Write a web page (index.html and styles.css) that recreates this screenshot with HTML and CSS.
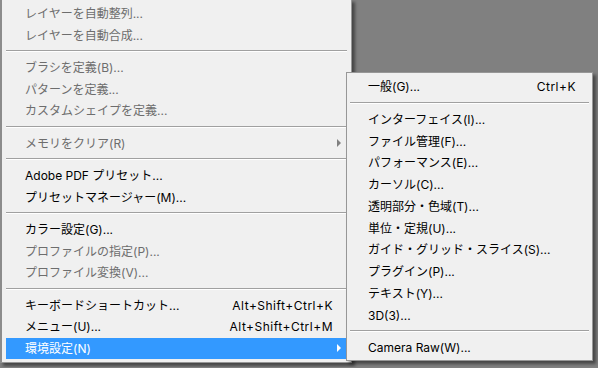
FILE: index.html
```html
<!DOCTYPE html>
<html lang="ja">
<head>
  <meta charset="UTF-8" />
  <title>編集メニュー - 環境設定</title>
  <link rel="stylesheet" href="styles.css">
</head>
<body>

<div class="desktop">
  <div class="menu main-menu">
    <div class="menu-item disabled">レイヤーを自動整列...</div>
    <div class="menu-item disabled">レイヤーを自動合成...</div>
    <div class="menu-sep"></div>
    <div class="menu-item disabled">ブラシを定義(B)...</div>
    <div class="menu-item disabled">パターンを定義...</div>
    <div class="menu-item disabled">カスタムシェイプを定義...</div>
    <div class="menu-sep"></div>
    <div class="menu-item disabled has-sub">メモリをクリア(R)</div>
    <div class="menu-sep"></div>
    <div class="menu-item">Adobe PDF プリセット...</div>
    <div class="menu-item">プリセットマネージャー(M)...</div>
    <div class="menu-sep"></div>
    <div class="menu-item">カラー設定(G)...</div>
    <div class="menu-item disabled">プロファイルの指定(P)...</div>
    <div class="menu-item disabled">プロファイル変換(V)...</div>
    <div class="menu-sep"></div>
    <div class="menu-item"><span>キーボードショートカット...</span><span class="shortcut">Alt+Shift+Ctrl+K</span></div>
    <div class="menu-item"><span>メニュー(U)...</span><span class="shortcut">Alt+Shift+Ctrl+M</span></div>
    <div class="menu-item active has-sub">環境設定(N)</div>
  </div>

  <!-- 環境設定 submenu -->
  <div class="menu sub-menu">
    <div class="menu-item"><span>一般(G)...</span><span class="shortcut">Ctrl+K</span></div>
    <div class="menu-sep"></div>
    <div class="menu-item">インターフェイス(I)...</div>
    <div class="menu-item">ファイル管理(F)...</div>
    <div class="menu-item">パフォーマンス(E)...</div>
    <div class="menu-item">カーソル(C)...</div>
    <div class="menu-item">透明部分・色域(T)...</div>
    <div class="menu-item">単位・定規(U)...</div>
    <div class="menu-item">ガイド・グリッド・スライス(S)...</div>
    <div class="menu-item">プラグイン(P)...</div>
    <div class="menu-item">テキスト(Y)...</div>
    <div class="menu-item">3D(3)...</div>
    <div class="menu-sep"></div>
    <div class="menu-item">Camera Raw(W)...</div>
  </div>
</div>

</body>
</html>
```

FILE: styles.css
```css
* { box-sizing: border-box; }

body {
  margin: 0;
  background-color: #808080;
  font-family: Inter, "Noto Sans CJK JP", sans-serif;
  font-size: 12px;
  overflow: hidden;
}

.desktop {
  position: relative;
  width: 598px;
  height: 368px;
}

.menu {
  background: #f0f0f0;
  border: 1px solid #979797;
  box-shadow: 3px 3px 3px rgba(0,0,0,0.45);
}

.main-menu {
  width: 352px;
  margin-top: -1px;
  padding: 3px 4px 3px 4px;
  border-left: 2px solid #8c8c8c;
}

.sub-menu {
  position: absolute;
  left: 346px;
  top: 73px;
  width: 247px;
  padding: 3px 3px 1px 3px;
}

.menu-item {
  position: relative;
  display: flex;
  justify-content: space-between;
  height: 21.5px;
  line-height: 21.5px;
  padding: 0 14px 0 19px;
  color: #000;
  white-space: nowrap;
}

.sub-menu .menu-item {
  height: 21.75px;
  line-height: 21.75px;
  padding: 0 13px 0 18px;
}

.shortcut {
  letter-spacing: 0.5px;
}

.menu-item.disabled {
  color: #6d6d6d;
}

.menu-item.active {
  background: #3399ff;
  color: #fff;
}

.has-sub::after {
  content: "";
  position: absolute;
  right: 6px;
  top: 50%;
  margin-top: -4px;
  border-left: 4px solid #808080;
  border-top: 4px solid transparent;
  border-bottom: 4px solid transparent;
}

.has-sub.active::after {
  border-left-color: #fff;
}

.menu-sep {
  height: 11px;
  padding-top: 4px;
}

.menu-sep::before {
  content: "";
  display: block;
  border-top: 1px solid #a0a0a0;
  border-bottom: 1px solid #fff;
}
```
